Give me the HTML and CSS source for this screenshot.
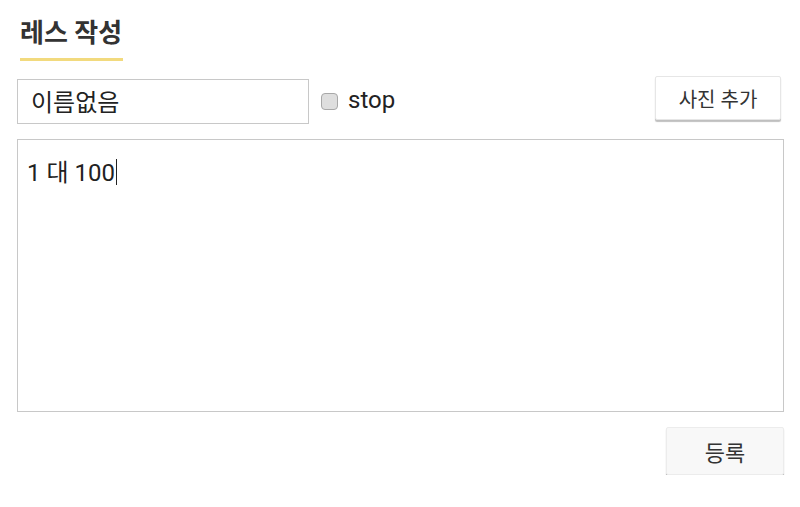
FILE: index.html
```html
<!DOCTYPE html>
<html lang="ko">
<head>
    <meta charset="UTF-8">
    <meta name="viewport" content="width=device-width, initial-scale=1.0">
    <title>레스 작성</title>
    <link rel="stylesheet" href="styles.css">
</head>
<body>
    <div class="container">
        <h2 class="title">레스 작성</h2>

        <div class="write-head">
            <input type="text" class="name-input" value="이름없음">
            <label class="stop-label">
                <input type="checkbox" class="stop-check">
                <span>stop</span>
            </label>
            <button class="button photo-button">사진 추가</button>
        </div>

        <div class="content-box">1 대 100<span class="caret"></span></div>

        <div class="write-foot">
            <button class="button submit-button">등록</button>
        </div>
    </div>
</body>
</html>
```

FILE: styles.css
```css
* {
    box-sizing: border-box;
}

body {
    font-family: Roboto, "Noto Sans CJK KR", sans-serif;
    margin: 0;
    padding: 0;
    background-color: #fff;
    color: #222;
}

.container {
    padding: 14px 16px 0 17px;
}

.title {
    display: inline-block;
    margin: 0 0 0 3px;
    padding: 0 1px 6px 0;
    font-size: 26px;
    font-weight: bold;
    color: #333;
    border-bottom: 3px solid #f2da7e;
    line-height: 38px;
}

.write-head {
    display: flex;
    align-items: flex-start;
    margin-top: 18px;
}

.name-input {
    width: 292px;
    height: 45px;
    margin-top: 0;
    padding: 0 13px 2px;
    border: 1px solid #c8c8c8;
    border-radius: 0;
    font-family: inherit;
    font-size: 24px;
    color: #222;
    outline: none;
}

.stop-label {
    display: flex;
    align-items: center;
    height: 42px;
    margin-left: 12px;
    font-size: 24px;
    color: #222;
}

.stop-check {
    appearance: none;
    -webkit-appearance: none;
    width: 17px;
    height: 17px;
    margin: 3px 10px 0 0;
    background: #dedede;
    border: 1px solid #a8a8a8;
    border-radius: 4px;
}

.button {
    background-color: #fff;
    color: #333;
    border: 1px solid #e6e6e6;
    border-radius: 2px;
    box-shadow: 0 2px 1px rgba(0, 0, 0, 0.25);
    font-family: inherit;
    cursor: pointer;
}

.photo-button {
    width: 126px;
    height: 44px;
    margin: -3px 3px 0 auto;
    font-size: 20px;
}

.content-box {
    height: 273px;
    margin-top: 15px;
    padding: 13px 9px;
    border: 1px solid #c8c8c8;
    font-size: 24px;
    color: #222;
}

.caret {
    display: inline-block;
    width: 1px;
    height: 26px;
    margin-left: 1px;
    vertical-align: -4px;
    background: #222;
}

.write-foot {
    display: flex;
    justify-content: flex-end;
    margin-top: 15px;
}

.submit-button {
    width: 118px;
    height: 48px;
    margin-right: 0;
    font-size: 22px;
    background-color: #f8f8f8;
    border-color: #ececec;
    box-shadow: 0 2px 1px rgba(0, 0, 0, 0.3);
}
```
